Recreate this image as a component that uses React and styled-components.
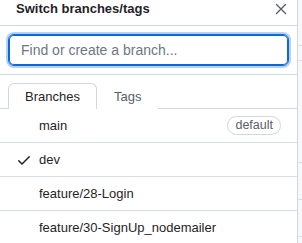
import React from 'react'
import styled, { createGlobalStyle } from 'styled-components'

const GlobalStyle = createGlobalStyle`
  html, body {
    margin: 0;
    padding: 0;
    background: #ffffff;
  }
  body {
    font-family: "Liberation Sans", Arial, sans-serif;
    color: #1f2328;
  }
`

const Page = styled.div`
  display: flex;
  width: 302px;
  height: 243px;
  overflow: hidden;
`

const Panel = styled.div`
  width: 297px;
  flex-shrink: 0;
  border-right: 1px solid #d0d7de;
  background: #ffffff;
  display: flex;
  flex-direction: column;
`

const Backdrop = styled.div`
  flex: 1;
  background: #f6f8fa;
  display: flex;
  flex-direction: column;
`

const BackLine = styled.div`
  height: ${props => props.h}px;
  border-bottom: 1px solid #d8dee4;
  flex-shrink: 0;
`

const Header = styled.div`
  display: flex;
  align-items: center;
  justify-content: space-between;
  height: 18px;
  padding: 0 10px 7px 16px;
  border-bottom: 1px solid #d0d7de;
`

const Title = styled.h3`
  margin: 0;
  font-size: 13px;
  font-weight: 700;
  line-height: 18px;
  color: #1f2328;
`

const CloseButton = styled.button`
  border: 0;
  background: none;
  padding: 0;
  width: 12px;
  height: 12px;
  display: flex;
  align-items: center;
  justify-content: center;
  color: #57606a;
  cursor: pointer;
`

const Filter = styled.div`
  padding: 8px;
  border-bottom: 1px solid #d0d7de;
`

const Input = styled.input`
  box-sizing: border-box;
  width: 281px;
  height: 32px;
  padding: 0 12px;
  border: 1px solid #0969da;
  border-radius: 6px;
  outline: none;
  box-shadow: inset 0 0 0 1px #0969da, 0 0 0 2px rgba(9, 105, 218, 0.3);
  font-family: inherit;
  font-size: 14px;
  color: #1f2328;
  &::placeholder {
    color: #6e7781;
  }
`

const Tabs = styled.div`
  display: flex;
  padding: 8px 8px 0;
  border-bottom: 1px solid #d0d7de;
`

const Tab = styled.div`
  height: 26px;
  box-sizing: border-box;
  padding: 0 16px;
  display: flex;
  align-items: center;
  font-size: 13px;
  color: ${props => (props.active ? '#1f2328' : '#57606a')};
  border: 1px solid ${props => (props.active ? '#d0d7de' : 'transparent')};
  border-bottom: 0;
  border-radius: 6px 6px 0 0;
  background: #ffffff;
  margin-bottom: -1px;
`

const List = styled.div`
  display: flex;
  flex-direction: column;
`

const Row = styled.div`
  display: flex;
  align-items: center;
  height: 33px;
  padding: 0 16px;
  border-bottom: 1px solid #d8dee4;
  font-size: 13px;
  color: #1f2328;
`

const CheckSlot = styled.span`
  width: 16px;
  height: 16px;
  margin-right: 7px;
  display: flex;
  align-items: center;
  justify-content: center;
  flex-shrink: 0;
`

const Name = styled.span`
  flex: 1;
  white-space: nowrap;
`

const Badge = styled.span`
  font-size: 12.5px;
  line-height: 17px;
  padding: 0 7px;
  border: 1px solid #d0d7de;
  border-radius: 2em;
  color: #57606a;
`

const XIcon = () => (
  <svg width="12" height="12" viewBox="0 0 12 12" fill="none" stroke="currentColor" strokeWidth="1.4" strokeLinecap="round">
    <path d="M1.5 1.5l9 9M10.5 1.5l-9 9" />
  </svg>
)

const CheckIcon = () => (
  <svg width="16" height="16" viewBox="0 0 16 16" fill="#1f2328">
    <path d="M13.78 4.22a.75.75 0 0 1 0 1.06l-7.25 7.25a.75.75 0 0 1-1.06 0L2.22 9.28a.751.751 0 0 1 .018-1.042.751.751 0 0 1 1.042-.018L6 10.94l6.72-6.72a.75.75 0 0 1 1.06 0Z" />
  </svg>
)

const branches = [
  { name: 'main', isDefault: true },
  { name: 'dev', current: true },
  { name: 'feature/28-Login' },
  { name: 'feature/30-SignUp_nodemailer' },
]

export default function App() {
  return (
    <>
      <GlobalStyle />
      <Page>
        <Panel>
          <Header>
            <Title>Switch branches/tags</Title>
            <CloseButton aria-label="Close">
              <XIcon />
            </CloseButton>
          </Header>
          <Filter>
            <Input placeholder="Find or create a branch..." />
          </Filter>
          <Tabs>
            <Tab active>Branches</Tab>
            <Tab>Tags</Tab>
          </Tabs>
          <List>
            {branches.map(b => (
              <Row key={b.name}>
                <CheckSlot>{b.current ? <CheckIcon /> : null}</CheckSlot>
                <Name>{b.name}</Name>
                {b.isDefault ? <Badge>default</Badge> : null}
              </Row>
            ))}
          </List>
        </Panel>
        <Backdrop>
          <BackLine h={45} />
          <BackLine h={14} />
          <BackLine h={101} />
          <BackLine h={36} />
          <BackLine h={36} />
        </Backdrop>
      </Page>
    </>
  )
}
